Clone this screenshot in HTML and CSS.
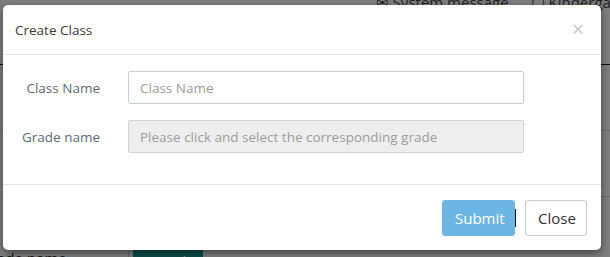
FILE: index.html
```html
<!DOCTYPE html>
<html lang="en">
  <head>
    <meta charset="UTF-8" />
    <meta name="viewport" content="width=device-width, initial-scale=1.0" />
    <title>Create Class</title>
    <link rel="stylesheet" href="styles.css">
  </head>
  <body>
    <!-- 背景页面 -->
    <div class="page">
      <div class="topbar">
        <span class="top-item">&#9993; System message</span>
        <span class="top-item">&#9634; Kindergarten</span>
      </div>
      <div class="page-lines">
        <div class="line dark"></div>
        <div class="line"></div>
        <div class="line"></div>
      </div>
      <div class="search-row">
        <span class="search-label">Grade name</span>
        <span class="search-input"></span>
        <span class="search-btn">Search</span>
      </div>
    </div>
    <div class="backdrop"></div>

    <!-- 弹窗 -->
    <div class="modal">
      <div class="modal-header">
        <h4 class="modal-title">Create Class</h4>
        <span class="close">&times;</span>
      </div>
      <form class="modal-body">
        <div class="form-group">
          <label for="cname" class="left_t">Class Name</label>
          <input type="text" id="cname" class="form-control" placeholder="Class Name" />
        </div>
        <div class="form-group">
          <label for="grade" class="left_t">Grade name</label>
          <input type="text" id="grade" class="form-control" placeholder="Please click and select the corresponding grade" readonly />
        </div>
      </form>
      <div class="modal-footer">
        <button type="button" class="btn btn-primary">Submit</button>
        <span class="cursor"></span>
        <button type="button" class="btn btn-default">Close</button>
      </div>
    </div>
  </body>
</html>
```

FILE: styles.css
```css
* {
  box-sizing: border-box;
}

body {
  margin: 0;
  width: 610px;
  height: 257px;
  overflow: hidden;
  font-family: "Open Sans", "Liberation Sans", sans-serif;
  font-size: 13.5px;
  color: #333;
  position: relative;
}

.page {
  height: 257px;
  background: #fff;
  display: flex;
  flex-direction: column;
  overflow: hidden;
}

.topbar {
  display: flex;
  justify-content: flex-end;
  gap: 22px;
  height: 20px;
  margin-top: -8px;
  margin-right: -30px;
  font-size: 15px;
  color: #444;
}

.page-lines {
  flex: 1;
  display: flex;
  flex-direction: column;
  justify-content: space-around;
  padding: 20px 0;
}

.line {
  height: 1px;
  background: #ddd;
}

.line.dark {
  background: #222;
}

.search-row {
  display: flex;
  align-items: flex-start;
  height: 12px;
  margin-bottom: -4px;
  font-size: 15px;
  color: #333;
}

.search-label {
  width: 148px;
  margin-left: -20px;
  line-height: 18px;
}

.search-input {
  width: 1px;
  height: 14px;
  background: #ccc;
}

.search-btn {
  margin-left: 4px;
  width: 70px;
  height: 20px;
  background: #1a9f94;
  color: #fff;
  text-align: center;
  line-height: 24px;
}

.backdrop {
  position: absolute;
  inset: 0;
  background: rgba(0, 0, 0, 0.5);
}

.modal {
  position: absolute;
  left: 3px;
  top: 5px;
  width: 598px;
  height: 245px;
  background: #fff;
  border-radius: 5px;
  box-shadow: 0 3px 9px rgba(0, 0, 0, 0.5);
  display: flex;
  flex-direction: column;
}

.modal-header {
  height: 50px;
  padding: 0 17px 0 12px;
  display: flex;
  align-items: center;
  justify-content: space-between;
  border-bottom: 1px solid #e5e5e5;
}

.modal-title {
  margin: 0;
  font-size: 13.5px;
  font-weight: 400;
  color: #3a3a3a;
}

.close {
  font-size: 21px;
  line-height: 1;
  color: #c8c8c8;
  margin-top: -1px;
}

.modal-body {
  margin: 0;
  padding: 16px 0 0;
  flex: 1;
  border-bottom: 1px solid #e5e5e5;
}

.form-group {
  display: flex;
  align-items: center;
  margin-bottom: 16px;
}

.left_t {
  width: 97px;
  text-align: right;
  margin-right: 28px;
  color: #606a76;
}

.form-control {
  width: 396px;
  height: 33px;
  padding: 0 11px;
  border: 1px solid #c3d0dc;
  border-radius: 2px;
  font-family: inherit;
  font-size: 13.5px;
  color: #555;
  background: #fff;
  outline: none;
}

.form-control::placeholder {
  color: #9c9c9c;
}

.form-control[readonly] {
  background: #eee;
  border-color: #ccd3da;
}

.modal-footer {
  height: 65px;
  display: flex;
  align-items: center;
  justify-content: flex-end;
  padding: 0 14px 0 0;
}

.btn {
  height: 36px;
  padding: 0 12px;
  font-family: inherit;
  font-size: 15px;
  border-radius: 3px;
  cursor: pointer;
}

.btn-primary {
  width: 73px;
  background: #6cb6e6;
  border: 1px solid #6cb6e6;
  color: #fff;
}

.cursor {
  width: 1px;
  height: 18px;
  background: #111;
  margin-right: 9px;
}

.btn-default {
  width: 62px;
  background: #fff;
  border: 1px solid #ccc;
  color: #333;
}
```
